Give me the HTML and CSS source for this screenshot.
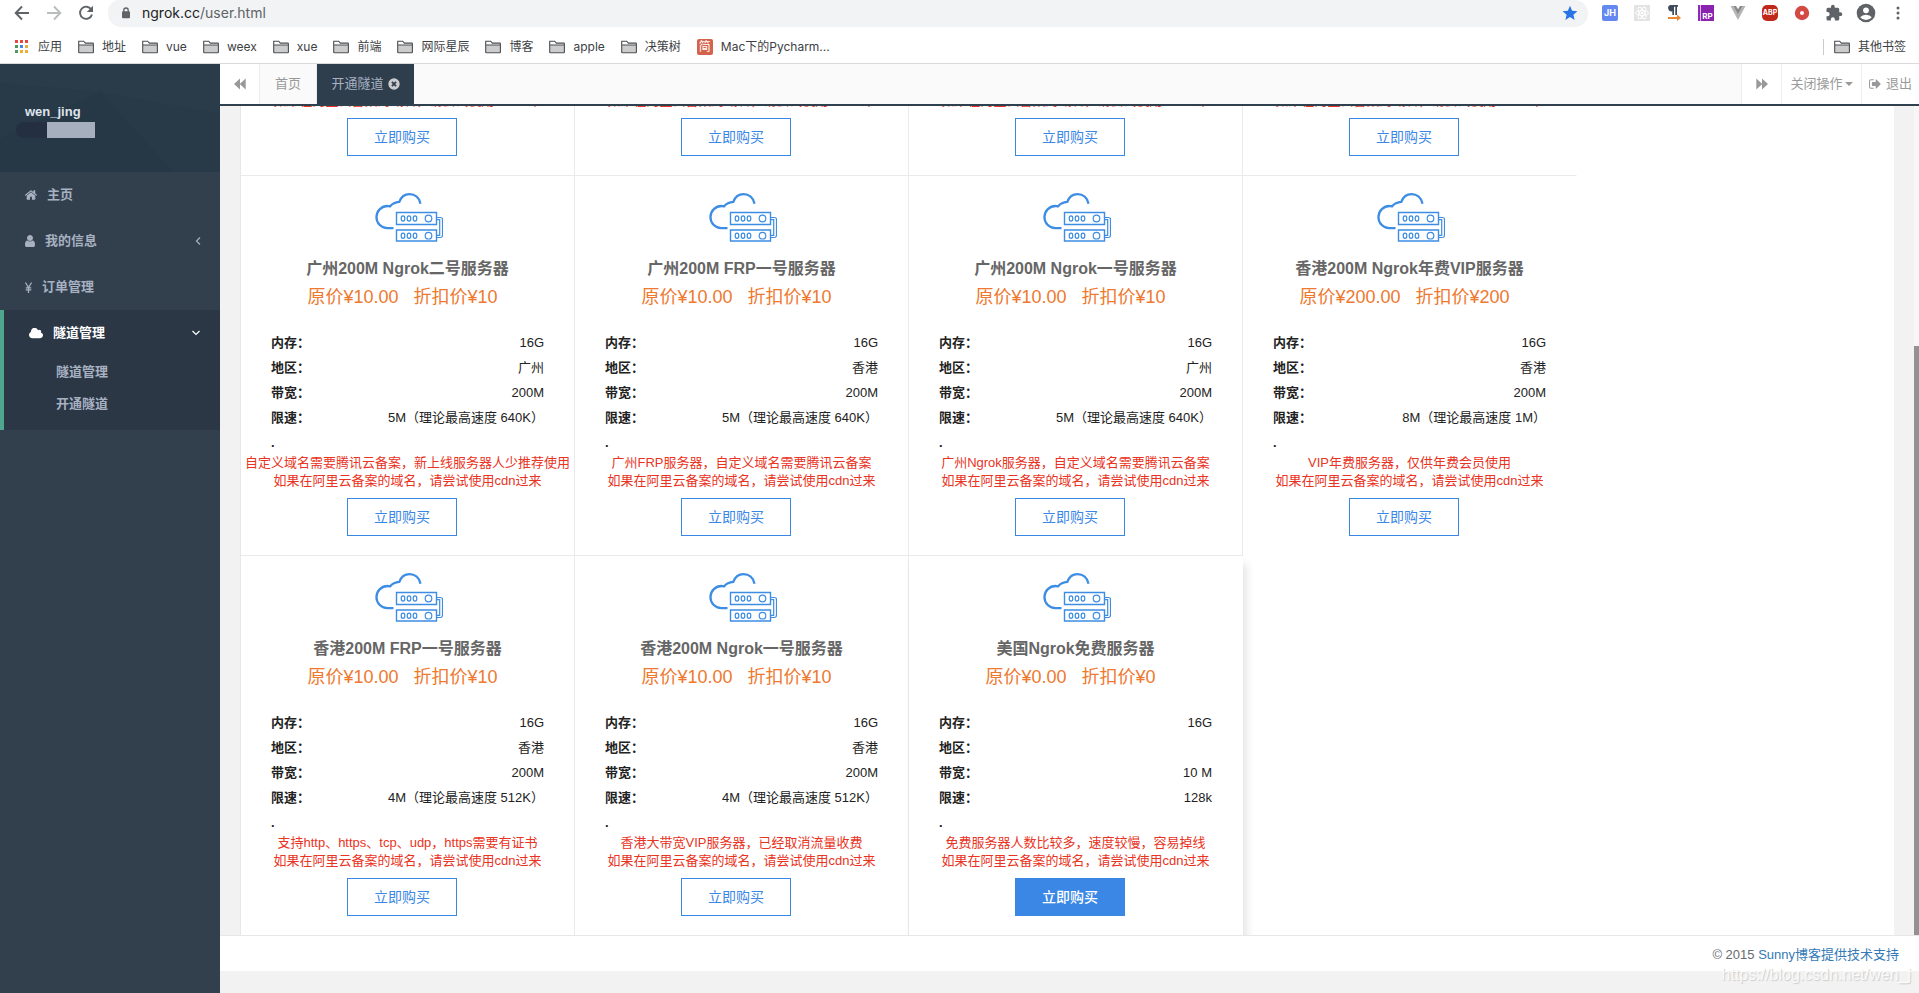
FILE: index.html
```html
<!DOCTYPE html>
<html lang="zh-CN">
<head>
<meta charset="utf-8">
<title>开通隧道</title>
<link rel="stylesheet" href="styles.css">
</head>
<body>
<svg class="defs" aria-hidden="true">
  <symbol id="folder" viewBox="0 0 16 14"><path d="M1 5h14v7.500H1z" fill="#ccc"/><path d="M.7 12.300V1.200h5l1.600 1.900h7.500q.6 0 .6.600v8.600q0 .5-.6.5H1.200q-.5 0-.5-.5zM.7 5h14.700" fill="none" stroke="#4a4d51" stroke-width="1.100"/></symbol>
  <symbol id="server" viewBox="0 0 68 49">
    <g fill="none" stroke="#3d8de4">
      <path d="M18.500 35.200H12.300A11.100 11.100 0 0 1 12.800 13q1.300 0 2.400.3Q18.200 9.300 24.300 8.900C26.500 3 30.500 1.200 34.500 1.200c5.500 0 9.800 3.600 11 9.500" stroke-width="2.300"/>
      <path d="M21.500 19.500h40v12h-40zM21.500 37h40v11h-40z" stroke-width="1.400"/>
      <g stroke-width="1.200"><ellipse cx="28" cy="25.500" rx="1.800" ry="2.600"/><ellipse cx="34" cy="25.500" rx="1.800" ry="2.600"/><ellipse cx="40" cy="25.500" rx="1.800" ry="2.600"/><circle cx="53.500" cy="25.500" r="3.300"/>
      <ellipse cx="28" cy="42.700" rx="1.800" ry="2.600"/><ellipse cx="34" cy="42.700" rx="1.800" ry="2.600"/><ellipse cx="40" cy="42.700" rx="1.800" ry="2.600"/><circle cx="53.500" cy="42.700" r="3.300"/>
      <path d="M61.500 24.500h4q2 0 2 2v15.500q0 2.500-2 2.500h-4M61.500 26.700h3.200v15.600h-3.200"/></g>
    </g>
  </symbol>
</svg>

<header class="browser">
  <div class="toolbar">
    <div class="nav">
      <button class="tool" aria-label="后退"><svg width="16" height="16" viewBox="0 0 16 16"><path d="M15 8H2M8 1.500 1.700 8 8 14.500" fill="none" stroke="#5f6368" stroke-width="1.900"/></svg></button>
      <button class="tool" aria-label="前进"><svg width="16" height="16" viewBox="0 0 16 16"><path d="M1 8h13M8 1.500 14.300 8 8 14.500" fill="none" stroke="#babcbe" stroke-width="1.900"/></svg></button>
      <button class="tool" aria-label="重新加载"><svg width="16" height="16" viewBox="0 0 16 16"><path d="M13.300 4.500A6.100 6.100 0 1 0 14 9.500" fill="none" stroke="#5f6368" stroke-width="1.900"/><path d="M15 .8V7H8.800z" fill="#5f6368"/></svg></button>
    </div>
    <div class="address">
      <svg width="10" height="12" viewBox="0 0 10 12"><path d="M2.800 5V3.200a2.200 2.200 0 0 1 4.400 0V5" fill="none" stroke="#5f6368" stroke-width="1.300"/><rect x="1" y="4.300" width="8" height="7" rx="1" fill="#5f6368"/></svg>
      <span class="url"><b>ngrok.cc</b>/user.html</span>
      <svg class="star" width="16" height="16" viewBox="0 0 16 16"><path d="m8 .8 2.100 4.900 5.300.5-4 3.500 1.200 5.200L8 12.100l-4.600 2.800 1.200-5.200-4-3.500 5.300-.5z" fill="#2874e6"/></svg>
    </div>
    <div class="extensions">
      <button class="tool" aria-label="JH"><span class="ext-jh">JH</span></button>
      <button class="tool" aria-label="React"><svg width="16" height="16" viewBox="0 0 16 16"><path d="M0 0h16v16H0z" fill="#e3e3e3"/><g fill="none" stroke="#fff"><ellipse cx="8" cy="8" rx="6.500" ry="2.500"/><ellipse cx="8" cy="8" rx="6.500" ry="2.500" transform="rotate(60 8 8)"/><ellipse cx="8" cy="8" rx="6.500" ry="2.500" transform="rotate(120 8 8)"/></g><circle cx="8" cy="8" r="1.300" fill="#fff"/></svg></button>
      <button class="tool" aria-label="段落"><svg width="16" height="16" viewBox="0 0 16 16"><path d="M4.500 0H12v1.700h-1V10H9.300V1.700H8V10H6.300V6.300A3.200 3.200 0 0 1 4.500 0z" fill="#3d4b5c"/><path d="M2 12h9V9.500l4 3.500-4 3v-2H2z" fill="#ed8733"/></svg></button>
      <button class="tool" aria-label="RP"><span class="ext-rp">RP</span></button>
      <button class="tool" aria-label="Vue"><svg width="16" height="16" viewBox="0 0 16 16"><path d="M.5 1h3.500l4 7 4-7h3.500L8 15z" fill="#b5b5b5"/><path d="M3.500 1H6l2 3.300L10 1h2.500L8 9z" fill="#888"/></svg></button>
      <button class="tool" aria-label="ABP"><span class="ext-abp">ABP</span></button>
      <button class="tool" aria-label="录制"><svg width="16" height="16" viewBox="0 0 16 16"><circle cx="8" cy="8" r="7.200" fill="#d24a43"/><circle cx="8" cy="8" r="2" fill="#fff"/></svg></button>
      <button class="tool" aria-label="扩展程序"><svg width="18" height="18" viewBox="0 0 24 24"><path d="M20.500 11H19V7a2 2 0 0 0-2-2h-4V3.500a2.500 2.500 0 0 0-5 0V5H4a2 2 0 0 0-2 2v3.800h1.500a2.700 2.700 0 0 1 0 5.400H2V20a2 2 0 0 0 2 2h3.800v-1.500a2.700 2.700 0 0 1 5.400 0V22H17a2 2 0 0 0 2-2v-4h1.500a2.500 2.500 0 0 0 0-5z" fill="#5f6368"/></svg></button>
      <button class="tool" aria-label="用户"><svg width="20" height="20" viewBox="0 0 20 20"><circle cx="10" cy="10" r="9.300" fill="#5f6368"/><circle cx="10" cy="7.300" r="2.900" fill="#fff"/><path d="M4.200 14.200Q6 11.700 10 11.700t5.800 2.500Q13.500 17 10 17t-5.800-2.800z" fill="#fff"/></svg></button>
      <button class="tool" aria-label="菜单"><svg width="16" height="16" viewBox="0 0 16 16" fill="#5f6368"><circle cx="8" cy="3" r="1.500"/><circle cx="8" cy="8" r="1.500"/><circle cx="8" cy="13" r="1.500"/></svg></button>
    </div>
  </div>
  <nav class="bookmarks">
    <a class="apps" href="#"><svg width="14" height="14" viewBox="0 0 14 14"><path d="M0 0h3v3H0zM5 0h3v3H5zM10 0h3v3h-3z" fill="#e04a3f"/><path d="M0 5h3v3H0zM0 10h3v3H0z" fill="#4c9a5b"/><path d="M5 5h3v3H5z" fill="#4286f0"/><path d="M10 5h3v3h-3zM5 10h3v3H5zM10 10h3v3h-3z" fill="#eaac3a"/></svg>应用</a>
    <a href="#"><svg width="16" height="14"><use href="#folder"/></svg>地址</a>
    <a href="#"><svg width="16" height="14"><use href="#folder"/></svg>vue</a>
    <a href="#"><svg width="16" height="14"><use href="#folder"/></svg>weex</a>
    <a href="#"><svg width="16" height="14"><use href="#folder"/></svg>xue</a>
    <a href="#"><svg width="16" height="14"><use href="#folder"/></svg>前端</a>
    <a href="#"><svg width="16" height="14"><use href="#folder"/></svg>网际星辰</a>
    <a href="#"><svg width="16" height="14"><use href="#folder"/></svg>博客</a>
    <a href="#"><svg width="16" height="14"><use href="#folder"/></svg>apple</a>
    <a href="#"><svg width="16" height="14"><use href="#folder"/></svg>决策树</a>
    <a href="#"><span class="jian">简</span>Mac下的Pycharm...</a>
    <a class="other" href="#"><svg width="16" height="14"><use href="#folder"/></svg>其他书签</a>
  </nav>
</header>

<div class="app">
  <aside class="sidebar">
    <div class="profile">
      <svg class="facets" viewBox="0 0 220 108" preserveAspectRatio="none"><path d="M0 0h120L100 28 0 19z" fill="#2a3b49"/><path d="M120 0h100v50l-120-22z" fill="#2a3c4a"/><path d="m100 28 50 54 22 26H0V75z" fill="#263745"/></svg>
      <strong class="name">wen_jing</strong>
      <div class="masked"><span></span></div>
    </div>
    <ul class="menu">
      <li><a href="#"><svg width="12" height="12" viewBox="90 200 1620 1400"><path d="M1472 992v480q0 26-19 45t-45 19h-384v-384h-256v384h-384q-26 0-45-19t-19-45v-480q0-1 .5-3t.5-3l575-474 575 474q1 2 1 6zm223-69l-62 74q-8 9-21 11h-3q-13 0-21-7l-692-577-692 577q-12 8-24 7-13-2-21-11l-62-74q-8-10-7-23.500t11-21.500l719-599q32-26 76-26t76 26l244 204v-195q0-14 9-23t23-9h192q14 0 23 9t9 23v408l219 182q10 8 11 21.500t-7 23.500z"/></svg>主页</a></li>
      <li><a href="#"><svg width="10" height="12" viewBox="256 128 1280 1536"><path d="M1536 1399q0 109-62.500 187t-150.500 78h-854q-88 0-150.500-78t-62.500-187q0-85 8.500-160.500t31.500-152 58.500-131 94-89 134.500-34.500q131 128 313 128t313-128q76 0 134.500 34.500t94 89 58.500 131 31.500 152 8.500 160.500zm-256-887q0 159-112.500 271.500t-271.500 112.500-271.500-112.500-112.500-271.500 112.500-271.500 271.500-112.500 271.500 112.500 112.500 271.500z"/></svg>我的信息<svg class="arrow" width="10" height="10" viewBox="0 0 10 10"><path d="M7 1.500 3.500 5 7 8.500"/></svg></a></li>
      <li><a href="#"><svg width="7" height="11" viewBox="0 0 7 11"><path d="m.4.500 3.100 5 3.100-5M3.500 5.500V11M.7 5.800h5.600M.7 7.900h5.600" fill="none" stroke="#a7b1c2" stroke-width="1.300"/></svg>订单管理</a></li>
      <li class="active"><a href="#"><svg width="14" height="11" viewBox="64 256 1920 1280"><path d="M1984 1152q0 159-112.500 271.500t-271.500 112.500h-1088q-185 0-316.500-131.500t-131.500-316.500q0-132 71-241.500t187-163.500q-2-28-2-43 0-212 150-362t362-150q158 0 286.500 88t187.500 230q70-62 166-62 106 0 181 75t75 181q0 75-41 138 129 30 213 134.500t84 239.500z"/></svg>隧道管理<svg class="arrow" width="10" height="10" viewBox="0 0 10 10"><path d="M1.500 3 5 6.500 8.500 3"/></svg></a>
        <ul class="submenu"><li><a href="#">隧道管理</a></li><li><a href="#">开通隧道</a></li></ul>
      </li>
    </ul>
  </aside>

  <main class="main">
    <div class="tabs">
      <button class="step prev" aria-label="向左"><svg width="12" height="12" viewBox="0 0 12 12"><path d="M6 .5v11L0 6zM11.700.5v11L5.700 6z"/></svg></button>
      <a class="tab" href="#">首页</a>
      <a class="tab current" href="#">开通隧道<svg width="12" height="12" viewBox="0 0 12 12"><circle cx="6" cy="6" r="5.700" fill="#ccc"/><path d="m3.900 3.900 4.200 4.200m0-4.200L3.900 8.100" stroke="#2f4050" stroke-width="1.800"/></svg></a>
      <div class="actions">
        <button class="step" aria-label="向右"><svg width="12" height="12" viewBox="0 0 12 12"><path d="M.3.500v11L6.300 6zM6 .5v11L12 6z"/></svg></button>
        <button class="close-ops">关闭操作<span class="caret"></span></button>
        <a class="logout" href="#"><svg width="12" height="12" viewBox="64 128 1600 1536"><path d="M704 1440q0 4 1 20t.5 26.500-3 23.500-10 19.500-20.500 6.500h-320q-119 0-203.500-84.500t-84.500-203.500v-704q0-119 84.500-203.500t203.500-84.500h320q13 0 22.500 9.500t9.500 22.500q0 4 1 20t.5 26.500-3 23.500-10 19.500-20.500 6.500h-320q-66 0-113 47t-47 113v704q0 66 47 113t113 47h312l11.500 1 11.500 3 8 5.500 7 9 2 13.500zm928-544q0 26-19 45l-544 544q-19 19-45 19t-45-19-19-45v-288h-448q-26 0-45-19t-19-45v-384q0-26 19-45t45-19h448v-288q0-26 19-45t45-19 45 19l544 544q19 19 19 45z"/></svg>退出</a>
      </div>
    </div>

    <div class="viewport">
      <section class="plans">
        <article class="card"><p class="notes">如果在阿里云备案的域名，请尝试使用cdn过来</p><button class="buy">立即购买</button></article>
        <article class="card"><p class="notes">如果在阿里云备案的域名，请尝试使用cdn过来</p><button class="buy">立即购买</button></article>
        <article class="card"><p class="notes">如果在阿里云备案的域名，请尝试使用cdn过来</p><button class="buy">立即购买</button></article>
        <article class="card row-end"><p class="notes">如果在阿里云备案的域名，请尝试使用cdn过来</p><button class="buy">立即购买</button></article>

        <article class="card">
          <svg class="picture" width="68" height="49"><use href="#server"/></svg>
          <h3>广州200M Ngrok二号服务器</h3>
          <p class="price">原价¥10.00 &nbsp; 折扣价¥10 &nbsp;</p>
          <dl><div><dt>内存：</dt><dd>16G</dd></div><div><dt>地区：</dt><dd>广州</dd></div><div><dt>带宽：</dt><dd>200M</dd></div><div><dt>限速：</dt><dd>5M（理论最高速度 640K）</dd></div><div class="more"><dt>.</dt></div></dl>
          <p class="notes">自定义域名需要腾讯云备案，新上线服务器人少推荐使用<br>如果在阿里云备案的域名，请尝试使用cdn过来</p>
          <button class="buy">立即购买</button>
        </article>
        <article class="card">
          <svg class="picture" width="68" height="49"><use href="#server"/></svg>
          <h3>广州200M FRP一号服务器</h3>
          <p class="price">原价¥10.00 &nbsp; 折扣价¥10 &nbsp;</p>
          <dl><div><dt>内存：</dt><dd>16G</dd></div><div><dt>地区：</dt><dd>香港</dd></div><div><dt>带宽：</dt><dd>200M</dd></div><div><dt>限速：</dt><dd>5M（理论最高速度 640K）</dd></div><div class="more"><dt>.</dt></div></dl>
          <p class="notes">广州FRP服务器，自定义域名需要腾讯云备案<br>如果在阿里云备案的域名，请尝试使用cdn过来</p>
          <button class="buy">立即购买</button>
        </article>
        <article class="card">
          <svg class="picture" width="68" height="49"><use href="#server"/></svg>
          <h3>广州200M Ngrok一号服务器</h3>
          <p class="price">原价¥10.00 &nbsp; 折扣价¥10 &nbsp;</p>
          <dl><div><dt>内存：</dt><dd>16G</dd></div><div><dt>地区：</dt><dd>广州</dd></div><div><dt>带宽：</dt><dd>200M</dd></div><div><dt>限速：</dt><dd>5M（理论最高速度 640K）</dd></div><div class="more"><dt>.</dt></div></dl>
          <p class="notes">广州Ngrok服务器，自定义域名需要腾讯云备案<br>如果在阿里云备案的域名，请尝试使用cdn过来</p>
          <button class="buy">立即购买</button>
        </article>
        <article class="card row-end open">
          <svg class="picture" width="68" height="49"><use href="#server"/></svg>
          <h3>香港200M Ngrok年费VIP服务器</h3>
          <p class="price">原价¥200.00 &nbsp; 折扣价¥200 &nbsp;</p>
          <dl><div><dt>内存：</dt><dd>16G</dd></div><div><dt>地区：</dt><dd>香港</dd></div><div><dt>带宽：</dt><dd>200M</dd></div><div><dt>限速：</dt><dd>8M（理论最高速度 1M）</dd></div><div class="more"><dt>.</dt></div></dl>
          <p class="notes">VIP年费服务器，仅供年费会员使用<br>如果在阿里云备案的域名，请尝试使用cdn过来</p>
          <button class="buy">立即购买</button>
        </article>

        <article class="card open">
          <svg class="picture" width="68" height="49"><use href="#server"/></svg>
          <h3>香港200M FRP一号服务器</h3>
          <p class="price">原价¥10.00 &nbsp; 折扣价¥10 &nbsp;</p>
          <dl><div><dt>内存：</dt><dd>16G</dd></div><div><dt>地区：</dt><dd>香港</dd></div><div><dt>带宽：</dt><dd>200M</dd></div><div><dt>限速：</dt><dd>4M（理论最高速度 512K）</dd></div><div class="more"><dt>.</dt></div></dl>
          <p class="notes">支持http、https、tcp、udp，https需要有证书<br>如果在阿里云备案的域名，请尝试使用cdn过来</p>
          <button class="buy">立即购买</button>
        </article>
        <article class="card open">
          <svg class="picture" width="68" height="49"><use href="#server"/></svg>
          <h3>香港200M Ngrok一号服务器</h3>
          <p class="price">原价¥10.00 &nbsp; 折扣价¥10 &nbsp;</p>
          <dl><div><dt>内存：</dt><dd>16G</dd></div><div><dt>地区：</dt><dd>香港</dd></div><div><dt>带宽：</dt><dd>200M</dd></div><div><dt>限速：</dt><dd>4M（理论最高速度 512K）</dd></div><div class="more"><dt>.</dt></div></dl>
          <p class="notes">香港大带宽VIP服务器，已经取消流量收费<br>如果在阿里云备案的域名，请尝试使用cdn过来</p>
          <button class="buy">立即购买</button>
        </article>
        <article class="card open raised">
          <svg class="picture" width="68" height="49"><use href="#server"/></svg>
          <h3>美国Ngrok免费服务器</h3>
          <p class="price">原价¥0.00 &nbsp; 折扣价¥0 &nbsp;</p>
          <dl><div><dt>内存：</dt><dd>16G</dd></div><div><dt>地区：</dt><dd></dd></div><div><dt>带宽：</dt><dd>10 M</dd></div><div><dt>限速：</dt><dd>128k</dd></div><div class="more"><dt>.</dt></div></dl>
          <p class="notes">免费服务器人数比较多，速度较慢，容易掉线<br>如果在阿里云备案的域名，请尝试使用cdn过来</p>
          <button class="buy">立即购买</button>
        </article>
      </section>
      <div class="track"><div class="thumb"></div></div>
    </div>

    <footer class="footer">© 2015 <a href="#">Sunny博客提供技术支持</a></footer>
    <div class="below"></div>
  </main>
</div>
<div class="watermark">https://blog.csdn.net/wen_j</div>
</body>
</html>
```
FILE: styles.css
```css
* { box-sizing: border-box; }

body {
  margin: 0;
  height: 100vh;
  display: flex;
  flex-direction: column;
  overflow: hidden;
  position: relative;
  font: 13px/18px "Liberation Sans", "Noto Sans CJK SC", sans-serif;
  color: #676a6c;
  background: #fff;
}

a { color: inherit; text-decoration: none; }
button { font: inherit; color: inherit; padding: 0; border: 0; background: none; }
ul, dl, dd, p, h3 { margin: 0; padding: 0; list-style: none; }
svg { display: block; flex: none; }
.defs { display: none; }

/* Browser bars */
.browser {
  height: 64px;
  flex: none;
  border-bottom: 1px solid #d9dadc;
  font-family: Inter, "Noto Sans CJK SC", sans-serif;
}
.toolbar { display: flex; height: 27px; }
.nav { display: flex; width: 108px; padding-left: 6px; }
.tool { width: 32px; height: 26px; display: flex; align-items: center; justify-content: center; }
.address {
  flex: 1;
  display: flex;
  align-items: center;
  padding: 0 10px 1px 13px;
  background: #f1f3f4;
  border-radius: 12px 14px 14px 14px;
}
.url { flex: 1; margin-left: 11px; font-size: 14px; color: #5f6368; }
.url b { font-weight: 400; color: #202124; }
.extensions { display: flex; margin: 0 5px 0 6px; }
.ext-jh, .ext-rp, .ext-abp, .jian {
  width: 16px;
  height: 16px;
  color: #fff;
  font-weight: 700;
  font-size: 9px;
  line-height: 16px;
  text-align: center;
  border-radius: 2px;
}
.ext-jh { background: #6488f2; }
.ext-rp { background: linear-gradient(90deg, #8d2bb5 2px, #e4b8f0 2px, #e4b8f0 3px, #8a24b0 3px); font-size: 8px; line-height: 22px; padding-left: 3px; border-radius: 0; }
.ext-abp { background: #c0281c; font-size: 7px; border-radius: 5px; }

.bookmarks { display: flex; align-items: center; gap: 16px; height: 36px; padding: 3px 13px 0 15px; font-size: 12px; color: #3c4043; }
.bookmarks a { display: flex; align-items: center; gap: 8px; white-space: nowrap; }
.bookmarks .apps { gap: 9px; }
.bookmarks .other { margin-left: auto; padding-left: 10px; border-left: 1px solid #ccc; line-height: 16px; }
.jian { background: #d4634b; font-size: 12px; font-weight: 400; }

/* Page frame */
.app { flex: 1; display: flex; min-height: 0; }
.sidebar { width: 220px; flex: none; background: #323f4d; color: #a7b1c2; font-weight: 700; }
.profile { position: relative; height: 108px; padding: 39px 16px 0; background: #283947; }
.facets { position: absolute; inset: 0; width: 100%; height: 100%; }
.name { position: relative; display: block; padding-left: 9px; color: #dfe4ed; }
.masked { position: relative; width: 79px; height: 16px; margin-top: 1px; padding-left: 31px; background: #242f42; border-radius: 8px 0 0 8px; }
.masked span { display: block; height: 16px; background: #a6afbd; }

.menu a { display: flex; align-items: center; gap: 10px; height: 46px; padding: 0 17px 0 25px; fill: #a7b1c2; }
.menu .arrow { margin-left: auto; fill: none; stroke: #a7b1c2; stroke-width: 1.2; }
.menu .active { border-left: 4px solid #4fa58d; background: #2b3745; padding-bottom: 10px; }
.active > a { color: #fff; fill: #fff; }
.menu .active > a { padding-right: 19px; }
.menu .active > a .arrow { stroke: #fff; }
.menu .submenu a { height: 32px; padding-left: 52px; }

.main { flex: 1; min-width: 0; display: flex; flex-direction: column; background: #f2f2f2; }
.tabs { display: flex; flex: none; height: 42px; background: #fafafa; border-bottom: 2px solid #2f404f; color: #999; fill: #999; }
.tabs button, .tabs a { display: flex; align-items: center; justify-content: center; background: #fff; }
.step { width: 40px; }
.prev { border-right: 1px solid #eee; }
.tabs .tab { width: 57px; background: #fafafa; border-right: 1px solid #eee; }
.tabs .current { width: 97px; gap: 4px; color: #a7b1c2; background: #2f3e4d; border: 0; }
.actions { display: flex; margin-left: auto; }
.actions > * { border-left: 1px solid #eee; }
.close-ops { width: 80px; gap: 2px; }
.caret { border: 4px solid transparent; border-top-color: #999; border-bottom: 0; }
.tabs .logout { width: 58px; gap: 5px; }

.viewport { flex: 1; min-height: 0; display: flex; overflow: hidden; padding-left: 20px; }
/* The last row's bottom edge runs under the footer line. */
.plans {
  flex: 1;
  margin: 0 20px -1px 0;
  display: grid;
  grid-template-columns: repeat(auto-fill, 334px);
  align-content: end;
  background: #fff;
  border-left: 1px solid #e7e7e7;
}
.track { width: 5px; background: #f7f7f7; display: flex; align-items: flex-end; }
.thumb { width: 5px; height: 71%; background: #929292; }

/* Server plan */
.card {
  display: flex;
  flex-direction: column;
  align-items: center;
  padding: 17px 0 19px;
  border-right: 1px solid #eaeaea;
  border-bottom: 1px solid #eaeaea;
  background: #fff;
}
.row-end { border-right-color: transparent; }
.open { border-bottom-color: transparent; }
.raised { border-right-color: transparent; box-shadow: 4px 8px 8px rgba(0, 0, 0, .1); }
.picture { margin-left: 3px; }
.card h3 { margin-top: 16px; font-size: 16px; line-height: 22px; color: #666; }
.price { margin-top: 4px; font-size: 18px; line-height: 26px; color: #ee792f; }
.card dl { align-self: stretch; margin-top: 20px; padding: 0 30px; color: #222; }
.card dl div { display: flex; justify-content: space-between; line-height: 25px; height: 25px; }
.card dl .more { height: 24px; }
.card dt { font-weight: 700; }
.notes { text-align: center; white-space: nowrap; color: #e93323; }
.buy { width: 110px; height: 38px; margin: 8px 11px 0 0; border: 1px solid #3b87e6; background: #fff; color: #3b87e6; font-size: 14px; }
.raised .buy { background: #3b87e6; color: #fff; font-weight: 500; }

.footer { flex: none; position: relative; height: 36px; padding: 0 20px; border-top: 1px solid #e7e7e7; background: #fff; line-height: 37px; text-align: right; }
.footer a { color: #337ab7; }
.below { flex: none; height: 22px; }
.watermark { position: absolute; right: 8px; bottom: 8px; font-size: 16px; line-height: 20px; color: rgba(255, 255, 255, .8); text-shadow: 1px 1px 1px #ccc; }
```
